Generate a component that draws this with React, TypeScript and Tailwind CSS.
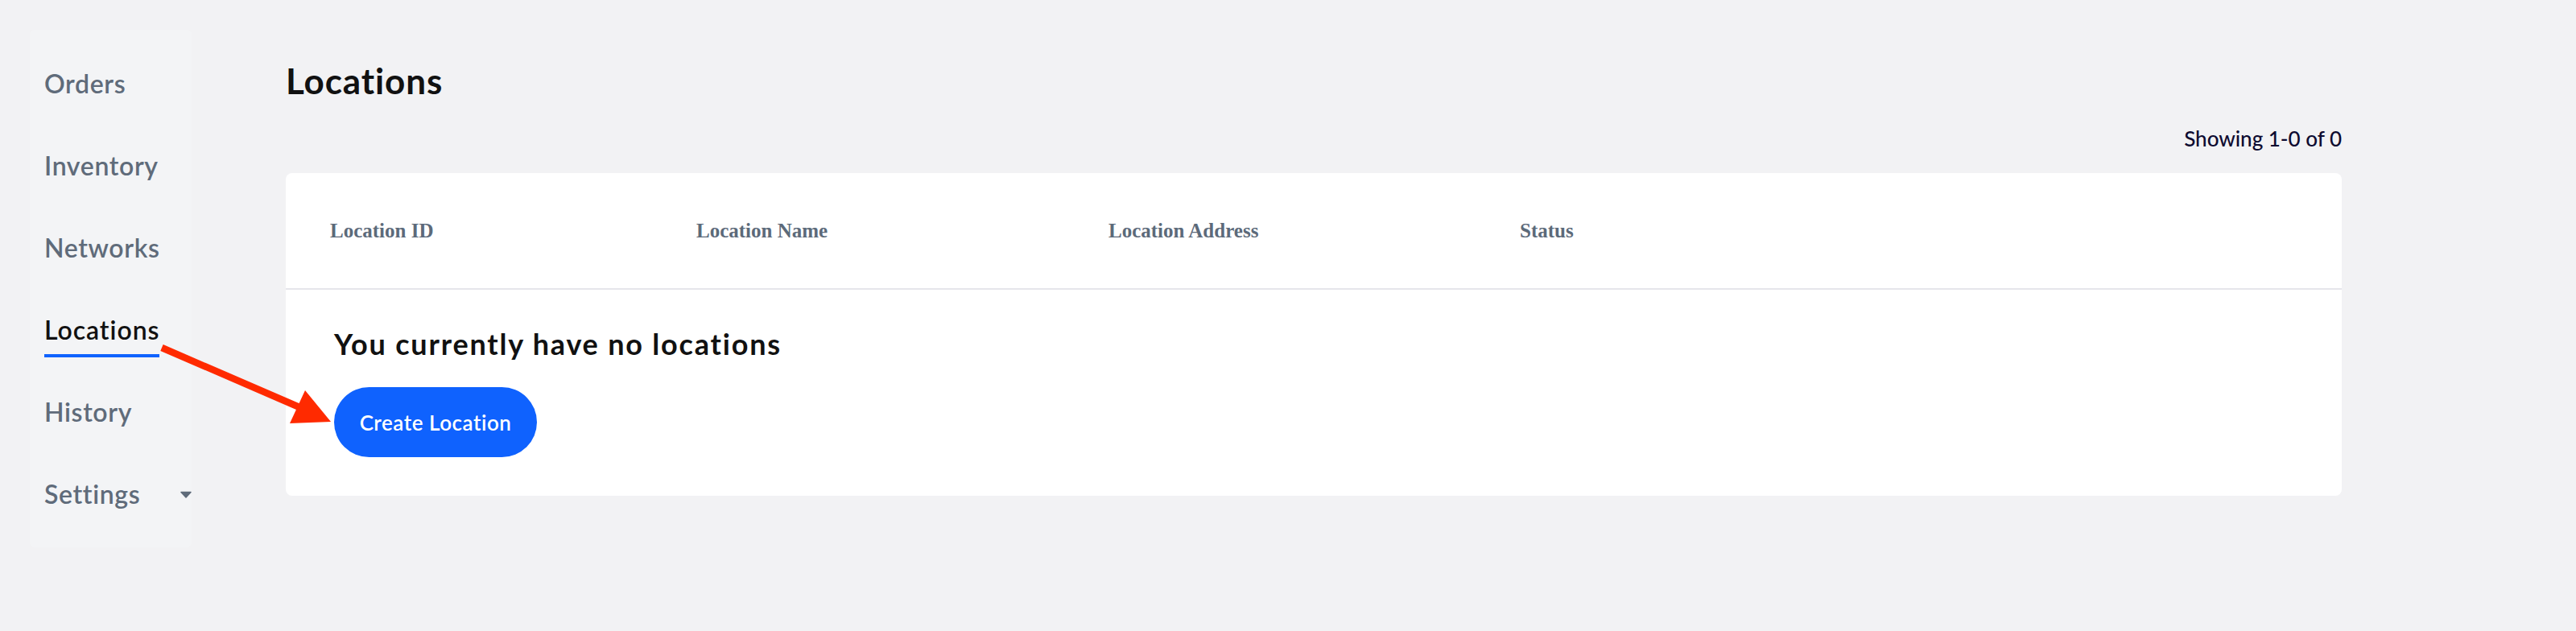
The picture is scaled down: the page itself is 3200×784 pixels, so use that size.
import React from "react";

const navItems = ["Orders", "Inventory", "Networks", "Locations", "History", "Settings"];
const columns = [
  { label: "Location ID", w: "w-[455px]" },
  { label: "Location Name", w: "w-[512px]" },
  { label: "Location Address", w: "w-[511px]" },
  { label: "Status", w: "w-[511px]" },
];

function Caret() {
  return (
    <svg width="14" height="9" viewBox="0 0 14 9">
      <path d="M1 1.5 L13 1.5 L7 8 Z" fill="#5f6b7a" stroke="#5f6b7a" strokeWidth="1.5" strokeLinejoin="round" />
    </svg>
  );
}

function SideNav() {
  return (
    <aside className="ml-[37px] mt-[37px] h-[643px] w-[201px] shrink-0 rounded-[6px] bg-[#f3f4f6] pt-[51px] pl-[18px]">
      {navItems.map((item) => {
        const active = item === "Locations";
        return (
          <div key={item} className="h-[102px]">
            {item === "Settings" ? (
              <div className="flex items-center justify-between">
                <span className="text-[32px] leading-none font-semibold tracking-[0.02em] text-[#5f6b7a]">{item}</span>
                <Caret />
              </div>
            ) : (
              <div className="w-fit">
                <span
                  className={
                    active
                      ? "block text-[32px] leading-none font-semibold tracking-[0.03em] text-[#111111]"
                      : "block text-[32px] leading-none font-semibold tracking-[0.02em] text-[#5f6b7a]"
                  }
                >
                  {item}
                </span>
                {active && <div className="mt-[14px] h-[4px] w-full bg-[#0f62fe]" />}
              </div>
            )}
          </div>
        );
      })}
    </aside>
  );
}

function Arrow() {
  return (
    <svg
      className="pointer-events-none absolute left-0 top-0"
      width="3200"
      height="784"
      viewBox="0 0 3200 784"
    >
      <line x1="201" y1="432" x2="372" y2="506" stroke="#ff2a00" strokeWidth="8.5" />
      <polygon points="411,524 379,485 360,526" fill="#ff2a00" />
    </svg>
  );
}

export default function App() {
  return (
    <div
      className="relative flex h-[784px] w-[3200px] bg-[#f2f2f4]"
      style={{ fontFamily: "Lato, 'Noto Sans', sans-serif" }}
    >
      <SideNav />
      <main className="ml-[117px] w-[2554px] pt-[78px]">
        <h1 className="text-[44px] leading-none font-bold tracking-[0.02em] text-[#111111]">Locations</h1>
        <div className="mt-[37px] text-right text-[26px] leading-none font-medium text-[#0e0b30]">
          Showing 1-0 of 0
        </div>
        <section className="mt-[30px] h-[401px] w-full rounded-[8px] bg-white">
          <div className="flex h-[145px] items-center border-b-2 border-[#e6e6eb] pl-[55px]">
            {columns.map((c) => (
              <div
                key={c.label}
                className={`${c.w} text-[25px] leading-none font-bold text-[#5c6a7a]`}
                style={{ fontFamily: "'Liberation Serif', serif" }}
              >
                {c.label}
              </div>
            ))}
          </div>
          <div className="pl-[60px] pt-[49px]">
            <h2 className="text-[36px] leading-none font-bold tracking-[0.05em] text-[#111111]">
              You currently have no locations
            </h2>
            <button className="mt-[36px] flex h-[87px] w-[252px] items-center justify-center rounded-full bg-[#0f62fe] text-[26px] leading-none font-semibold tracking-[0.02em] text-white">
              Create Location
            </button>
          </div>
        </section>
      </main>
      <Arrow />
    </div>
  );
}
